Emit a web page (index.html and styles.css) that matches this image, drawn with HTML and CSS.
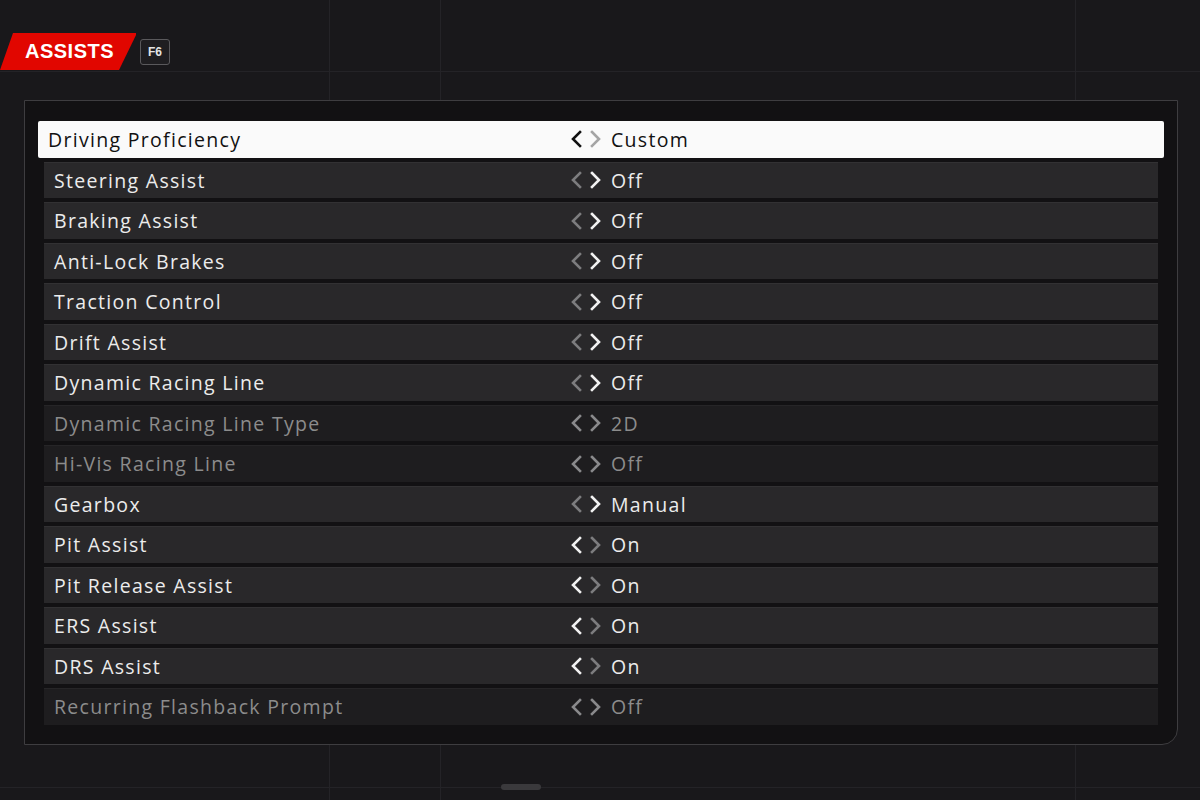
FILE: index.html
```html
<!DOCTYPE html>
<html lang="en">

<head>
    <meta charset="UTF-8">
    <meta name="viewport" content="width=device-width, initial-scale=1.0">
    <title>Assists</title>
    <link rel="stylesheet" href="styles.css">
</head>

<body>
    <div class="bg-lines">
        <span class="ln h1"></span>
        <span class="ln h2"></span>
        <span class="ln v1"></span>
        <span class="ln v2"></span>
        <span class="ln v3"></span>
        <span class="handle"></span>
    </div>

    <header class="top">
        <div class="tab">ASSISTS</div>
        <div class="key">F6</div>
    </header>

    <main class="panel">
        <ul class="list">
            <li class="row selected">
                <span class="label">Driving Proficiency</span>
                <span class="arrows dark"><svg viewBox="0 0 12 18"><path d="M10 2 L3 9 L10 16"/></svg><svg class="dim" viewBox="0 0 12 18"><path d="M2 2 L9 9 L2 16"/></svg></span>
                <span class="value">Custom</span>
            </li>
            <li class="row">
                <span class="label">Steering Assist</span>
                <span class="arrows"><svg class="dim" viewBox="0 0 12 18"><path d="M10 2 L3 9 L10 16"/></svg><svg viewBox="0 0 12 18"><path d="M2 2 L9 9 L2 16"/></svg></span>
                <span class="value">Off</span>
            </li>
            <li class="row">
                <span class="label">Braking Assist</span>
                <span class="arrows"><svg class="dim" viewBox="0 0 12 18"><path d="M10 2 L3 9 L10 16"/></svg><svg viewBox="0 0 12 18"><path d="M2 2 L9 9 L2 16"/></svg></span>
                <span class="value">Off</span>
            </li>
            <li class="row">
                <span class="label">Anti-Lock Brakes</span>
                <span class="arrows"><svg class="dim" viewBox="0 0 12 18"><path d="M10 2 L3 9 L10 16"/></svg><svg viewBox="0 0 12 18"><path d="M2 2 L9 9 L2 16"/></svg></span>
                <span class="value">Off</span>
            </li>
            <li class="row">
                <span class="label">Traction Control</span>
                <span class="arrows"><svg class="dim" viewBox="0 0 12 18"><path d="M10 2 L3 9 L10 16"/></svg><svg viewBox="0 0 12 18"><path d="M2 2 L9 9 L2 16"/></svg></span>
                <span class="value">Off</span>
            </li>
            <li class="row">
                <span class="label">Drift Assist</span>
                <span class="arrows"><svg class="dim" viewBox="0 0 12 18"><path d="M10 2 L3 9 L10 16"/></svg><svg viewBox="0 0 12 18"><path d="M2 2 L9 9 L2 16"/></svg></span>
                <span class="value">Off</span>
            </li>
            <li class="row">
                <span class="label">Dynamic Racing Line</span>
                <span class="arrows"><svg class="dim" viewBox="0 0 12 18"><path d="M10 2 L3 9 L10 16"/></svg><svg viewBox="0 0 12 18"><path d="M2 2 L9 9 L2 16"/></svg></span>
                <span class="value">Off</span>
            </li>
            <li class="row disabled">
                <span class="label">Dynamic Racing Line Type</span>
                <span class="arrows"><svg viewBox="0 0 12 18"><path d="M10 2 L3 9 L10 16"/></svg><svg viewBox="0 0 12 18"><path d="M2 2 L9 9 L2 16"/></svg></span>
                <span class="value">2D</span>
            </li>
            <li class="row disabled">
                <span class="label">Hi-Vis Racing Line</span>
                <span class="arrows"><svg viewBox="0 0 12 18"><path d="M10 2 L3 9 L10 16"/></svg><svg viewBox="0 0 12 18"><path d="M2 2 L9 9 L2 16"/></svg></span>
                <span class="value">Off</span>
            </li>
            <li class="row">
                <span class="label">Gearbox</span>
                <span class="arrows"><svg class="dim" viewBox="0 0 12 18"><path d="M10 2 L3 9 L10 16"/></svg><svg viewBox="0 0 12 18"><path d="M2 2 L9 9 L2 16"/></svg></span>
                <span class="value">Manual</span>
            </li>
            <li class="row">
                <span class="label">Pit Assist</span>
                <span class="arrows"><svg viewBox="0 0 12 18"><path d="M10 2 L3 9 L10 16"/></svg><svg class="dim" viewBox="0 0 12 18"><path d="M2 2 L9 9 L2 16"/></svg></span>
                <span class="value">On</span>
            </li>
            <li class="row">
                <span class="label">Pit Release Assist</span>
                <span class="arrows"><svg viewBox="0 0 12 18"><path d="M10 2 L3 9 L10 16"/></svg><svg class="dim" viewBox="0 0 12 18"><path d="M2 2 L9 9 L2 16"/></svg></span>
                <span class="value">On</span>
            </li>
            <li class="row">
                <span class="label">ERS Assist</span>
                <span class="arrows"><svg viewBox="0 0 12 18"><path d="M10 2 L3 9 L10 16"/></svg><svg class="dim" viewBox="0 0 12 18"><path d="M2 2 L9 9 L2 16"/></svg></span>
                <span class="value">On</span>
            </li>
            <li class="row">
                <span class="label">DRS Assist</span>
                <span class="arrows"><svg viewBox="0 0 12 18"><path d="M10 2 L3 9 L10 16"/></svg><svg class="dim" viewBox="0 0 12 18"><path d="M2 2 L9 9 L2 16"/></svg></span>
                <span class="value">On</span>
            </li>
            <li class="row disabled">
                <span class="label">Recurring Flashback Prompt</span>
                <span class="arrows"><svg viewBox="0 0 12 18"><path d="M10 2 L3 9 L10 16"/></svg><svg viewBox="0 0 12 18"><path d="M2 2 L9 9 L2 16"/></svg></span>
                <span class="value">Off</span>
            </li>
        </ul>
    </main>
</body>

</html>
```

FILE: styles.css
```css
html,
body {
    margin: 0;
    padding: 0;
    box-sizing: border-box;
}

body {
    height: 800px;
    width: 1200px;
    overflow: hidden;
    background: #19181b;
    font-family: "Open Sans", "Noto Sans", sans-serif;
    position: relative;
}

/* faint backdrop lines */
.bg-lines {
    position: absolute;
    inset: 0;
    pointer-events: none;
}

.ln {
    position: absolute;
    background: #242327;
}

.h1 {
    left: 0;
    right: 0;
    top: 71px;
    height: 1px;
}

.h2 {
    left: 0;
    right: 0;
    top: 787px;
    height: 1px;
}

.v1 {
    left: 329px;
    top: 0;
    bottom: 0;
    width: 1px;
}

.v2 {
    left: 440px;
    top: 0;
    bottom: 0;
    width: 1px;
}

.v3 {
    left: 1075px;
    top: 0;
    bottom: 0;
    width: 1px;
}

.handle {
    position: absolute;
    left: 501px;
    top: 784px;
    width: 40px;
    height: 6px;
    border-radius: 3px;
    background: #3a393c;
}

.top {
    position: relative;
    display: flex;
    align-items: center;
    gap: 4px;
    padding-top: 33px;
    height: 37px;
}

.tab {
    height: 37px;
    width: 136px;
    background: #e10600;
    clip-path: polygon(13px 0, 137px 0, 119px 100%, 0 100%);
    color: #fff;
    font-family: "Liberation Sans", Arial, sans-serif;
    font-weight: 700;
    font-size: 20px;
    line-height: 37px;
    padding-left: 25px;
    box-sizing: border-box;
    letter-spacing: 0.5px;
}

.key {
    width: 30px;
    height: 26px;
    box-sizing: border-box;
    border: 1.5px solid #5a595c;
    border-radius: 3px;
    background: #1f1e21;
    color: #e4e4e4;
    font-family: "Liberation Sans", Arial, sans-serif;
    font-weight: 700;
    font-size: 12px;
    display: flex;
    align-items: center;
    justify-content: center;
}

.panel {
    position: relative;
    margin: 30px 0 0 24px;
    width: 1154px;
    height: 645px;
    box-sizing: border-box;
    border: 1px solid #3e3d40;
    border-bottom-right-radius: 16px;
    background: #121113;
    padding: 20px 19px 0 19px;
}

.list {
    list-style: none;
    margin: 0;
    padding: 0;
    display: flex;
    flex-direction: column;
    gap: 4px;
}

.row {
    height: 36.5px;
    display: flex;
    align-items: center;
    background: #29282a;
    border-top: 1px solid #323133;
    box-sizing: border-box;
    padding-left: 10px;
    color: #ececec;
    font-size: 19.5px;
    letter-spacing: 1.3px;
}

.row.selected {
    margin: 0 -6px;
    padding-left: 10px;
    background: #fafafa;
    border-top: none;
    border-radius: 2px;
    color: #111;
}

.row.disabled {
    background: #1e1d1f;
    border-top: 1px solid #262527;
    color: #8c8c8c;
}

.label {
    width: 516px;
}

.row.selected .label {
    width: 522px;
}

.arrows {
    display: flex;
    gap: 8px;
    width: 41px;
}

.arrows svg {
    width: 12px;
    height: 18px;
    fill: none;
    stroke: #f2f2f2;
    stroke-width: 2.6;
    stroke-linecap: square;
}

.arrows svg.dim {
    stroke: #7d7d7f;
}

.arrows.dark svg {
    stroke: #111;
}

.arrows.dark svg.dim {
    stroke: #a5a5a5;
}

.row.disabled .arrows svg {
    stroke: #8a8a8c;
}
```
